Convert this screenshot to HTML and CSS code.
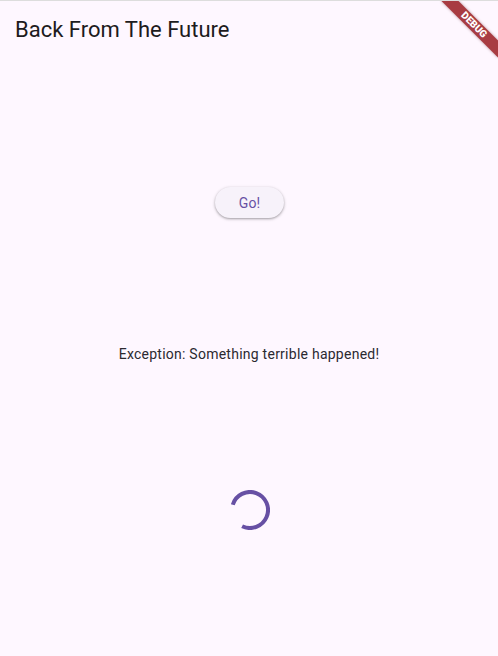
FILE: index.html
```html
<!DOCTYPE html>
<html>
<head>
<meta charset="utf-8">
<link rel="stylesheet" href="styles.css">
</head>
<body>
<div class="app">
  <header class="appbar">
    <h1 class="title">Back From The Future</h1>
  </header>
  <main class="content">
    <button class="btn">Go!</button>
    <p class="message">Exception: Something terrible happened!</p>
    <svg class="spinner" width="40" height="40" viewBox="0 0 40 40">
      <path d="M2.79 14.74 A18 18 0 1 1 12.11 36.18" fill="none" stroke="#6750a4" stroke-width="4"/>
    </svg>
  </main>
  <div class="debug-banner">DEBUG</div>
</div>
</body>
</html>
```
FILE: styles.css
```css
html, body {
  margin: 0;
  padding: 0;
  width: 498px;
  height: 656px;
  overflow: hidden;
  background: #fef7ff;
  font-family: Roboto, "Noto Sans", sans-serif;
}
.app {
  position: relative;
  width: 498px;
  height: 656px;
  border-top: 1px solid #dddddd;
  box-sizing: border-box;
  display: flex;
  flex-direction: column;
  overflow: hidden;
}
.appbar {
  height: 56px;
  flex: none;
  display: flex;
  align-items: center;
  padding: 0 16px 0 15px;
}
.title {
  margin: 0;
  font-size: 22px;
  font-weight: 400;
  line-height: 28px;
  color: #1d1b20;
  padding-top: 2px;
}
.content {
  flex: 1;
  display: flex;
  flex-direction: column;
  align-items: center;
  justify-content: space-evenly;
  padding-top: 4px;
}
.btn {
  height: 31px;
  padding: 0 24px;
  border: none;
  border-radius: 16px;
  background: #f7f2fa;
  color: #6750a4;
  font-family: Roboto, sans-serif;
  font-size: 14px;
  font-weight: 400;
  letter-spacing: 0.1px;
  box-shadow: 0 1px 2px rgba(0,0,0,0.25), 0 1px 3px 1px rgba(0,0,0,0.1);
  margin-left: 1px;
}
.message {
  margin: 0;
  font-size: 14px;
  line-height: 20px;
  letter-spacing: 0.25px;
  color: #2b2930;
}
.spinner {
  display: block;
  margin-left: 1px;
}
.debug-banner {
  position: absolute;
  left: 434px;
  top: 18px;
  width: 80px;
  height: 12px;
  background: #a83c42;
  color: #fff;
  font-family: Roboto, sans-serif;
  font-size: 10px;
  font-weight: 900;
  line-height: 12px;
  text-align: center;
  transform: rotate(45deg);
  box-shadow: 0 0 3px rgba(80,0,0,0.4);
}
```
